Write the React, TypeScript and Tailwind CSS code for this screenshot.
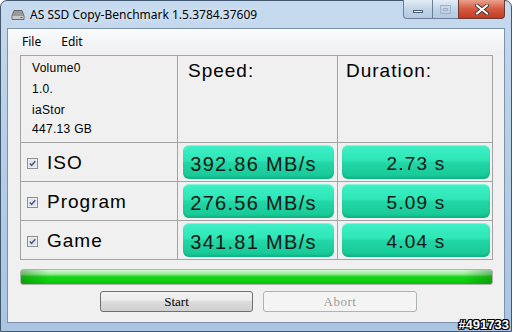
import React from "react"

const rows = [
  { name: "ISO", speed: "392.86 MB/s", dur: "2.73 s" },
  { name: "Program", speed: "276.56 MB/s", dur: "5.09 s" },
  { name: "Game", speed: "341.81 MB/s", dur: "4.04 s" },
]

function DriveIcon() {
  return (
    <svg width="14" height="12" viewBox="0 0 14 12">
      <path d="M3 1.5 H11 L13 7 V10.5 H1 V7 Z" fill="#9a9a9a" stroke="#6b6b6b" strokeWidth="1" />
      <rect x="1.5" y="7" width="11" height="3" fill="#c8c8c8" />
      <rect x="9.5" y="8" width="2" height="1" fill="#5a5a5a" />
    </svg>
  )
}

function CheckBox() {
  return (
    <svg width="11" height="11" viewBox="0 0 11 11">
      <rect x="0.5" y="0.5" width="10" height="10" fill="#f4f4f4" stroke="#8f8f8f" />
      <rect x="1.5" y="1.5" width="8" height="8" fill="#e2e4ea" />
      <path d="M2.8 5.4 L4.6 7.3 L8.3 3.2" fill="none" stroke="#4a5a8c" strokeWidth="1.5" />
    </svg>
  )
}

function GreenCell({ text, wide }: { text: string; wide?: boolean }) {
  return (
    <div
      className={`h-full rounded-[6px] bg-[linear-gradient(to_bottom,#3ef0c6_0%,#2ee6b6_45%,#22d6a5_52%,#16c795_100%)] shadow-[inset_0_-2px_2px_rgba(0,120,80,0.25),inset_0_1px_1px_rgba(255,255,255,0.4)] flex items-center justify-center pt-[4px] text-[#161616] font-['Liberation_Sans',Arial,sans-serif] ${
        wide ? "text-[20px] tracking-[1.3px] pr-[10px]" : "text-[19px] tracking-[1.2px]"
      }`}
    >
      {text}
    </div>
  )
}

export default function App() {
  return (
    <div className="relative w-[513px] h-[332px] bg-white overflow-hidden">
      {/* window frame */}
      <div className="w-[512px] h-[332px] rounded-t-[7px] border border-[#42586e] bg-[linear-gradient(to_bottom,#c6daef_0%,#b7cfe8_40%,#aac5e2_100%)] px-[6px] flex flex-col">
        {/* title bar */}
        <div className="h-[27px] flex items-start justify-between">
          <div className="flex items-center gap-[5px] pl-[4px] pt-[7px]">
            <DriveIcon />
            <span className="text-[12px] leading-[14px] text-black font-['Noto_Sans',sans-serif] [text-shadow:0_0_6px_rgba(255,255,255,0.9)]">
              AS SSD Copy-Benchmark 1.5.3784.37609
            </span>
          </div>
          <div className="flex h-[19px] -mt-px">
            <div className="w-[29px] rounded-bl-[4px] border border-r-0 border-t-0 border-[#6b7f96] bg-[linear-gradient(to_bottom,#e3edf7,#c3d4e7_50%,#b4c9e0)] flex items-center justify-center">
              <div className="w-[10px] h-[3px] mt-[4px] bg-white border border-[#4c5d72]" />
            </div>
            <div className="w-[26px] border-l border-b border-[#6b7f96] bg-[linear-gradient(to_bottom,#e3edf7,#c3d4e7_50%,#b4c9e0)] flex items-center justify-center">
              <div className="w-[11px] h-[9px] border border-[#9fb1c6] flex items-center justify-center">
                <div className="w-[5px] h-[3px] border border-[#9fb1c6]" />
              </div>
            </div>
            <div className="w-[47px] rounded-br-[4px] border border-t-0 border-[#6b3a32] bg-[linear-gradient(to_bottom,#e9a18d,#d45a41_50%,#c13c22)] flex items-center justify-center">
              <svg width="14" height="11" viewBox="0 0 14 11">
                <path d="M2 1.5 L12 9.5 M12 1.5 L2 9.5" stroke="#3a2a2a" strokeWidth="3.6" strokeLinecap="square" />
                <path d="M2 1.5 L12 9.5 M12 1.5 L2 9.5" stroke="#ffffff" strokeWidth="2" strokeLinecap="square" />
              </svg>
            </div>
          </div>
        </div>

        {/* client area */}
        <div className="h-[295px] border border-[#7d91aa] bg-[#f0f0f0] flex flex-col font-['Liberation_Sans',Arial,sans-serif]">
          {/* menu */}
          <div className="h-[22px] flex items-center gap-[20px] pl-[14px] pt-[3px] bg-[linear-gradient(to_bottom,#fafbfc,#eff1f4)] text-[12px] text-black font-['Noto_Sans',sans-serif]">
            <span>File</span>
            <span>Edit</span>
          </div>

          {/* results table */}
          <div className="ml-[12px] mt-[4px] w-[473px] grid grid-cols-[156px_159px_154px] grid-rows-[86px_38px_38px_38px] gap-px p-px bg-[#a3a3a3]">
            <div className="bg-[#f0f0f0] pl-[11px] pt-[2px] text-[12px] tracking-[0.3px] text-black">
              <div className="leading-[21px]">Volume0</div>
              <div className="leading-[21px]">1.0.</div>
              <div className="leading-[21px]">iaStor</div>
              <div className="leading-[17px]">447.13 GB</div>
            </div>
            <div className="bg-[#f0f0f0] pl-[10px] pt-[1px] text-[19px] tracking-[1px] text-black">Speed:</div>
            <div className="bg-[#f0f0f0] pl-[8px] pt-[1px] text-[19px] tracking-[1px] text-black">Duration:</div>

            {rows.map((r) => (
              <React.Fragment key={r.name}>
                <div className="bg-[#f0f0f0] flex items-center gap-[9px] pl-[6px] pt-[2px]">
                  <CheckBox />
                  <span className="text-[19px] tracking-[1px] text-black">{r.name}</span>
                </div>
                <div className="bg-[#f0f0f0] pl-[5px] pr-[3px] py-[2px]">
                  <GreenCell text={r.speed} wide />
                </div>
                <div className="bg-[#f0f0f0] pl-[4px] pr-[2px] py-[2px]">
                  <GreenCell text={r.dur} />
                </div>
              </React.Fragment>
            ))}
          </div>

          {/* progress bar */}
          <div className="ml-[12px] mt-[9px] w-[473px] h-[16px] rounded-[3px] border border-[#b2b2b2] bg-[linear-gradient(to_bottom,#d6f8d6_0%,#92ec92_30%,#1ad61a_48%,#06c606_100%)] overflow-hidden">
            <div className="w-full h-full bg-[linear-gradient(to_right,rgba(0,90,0,0.35)_0%,rgba(0,90,0,0)_6%,rgba(0,90,0,0)_94%,rgba(0,90,0,0.35)_100%)]" />
          </div>

          {/* buttons */}
          <div className="flex gap-[10px] ml-[92px] mt-[6px]">
            <div className="w-[153px] h-[21px] rounded-[3px] border border-[#707070] bg-[linear-gradient(to_bottom,#f2f2f2_0%,#ebebeb_50%,#dddddd_50%,#cfcfcf_100%)] flex items-center justify-center text-[13px] text-black font-['Liberation_Serif',serif]">
              Start
            </div>
            <div className="w-[154px] h-[21px] rounded-[3px] border border-[#adb2b5] bg-[#f4f4f4] flex items-center justify-center text-[13px] tracking-[0.5px] text-[#9c9c9c] font-['Liberation_Serif',serif]">
              Abort
            </div>
          </div>
        </div>
      </div>

      {/* watermark */}
      <div className="absolute right-[4px] bottom-[0px] text-[13px] leading-[14px] font-bold text-white font-['Liberation_Sans',Arial,sans-serif] [text-shadow:1px_0_0_#000,-1px_0_0_#000,0_1px_0_#000,0_-1px_0_#000,1px_1px_0_#000,-1px_-1px_0_#000,1px_-1px_0_#000,-1px_1px_0_#000]">
        #491733
      </div>
    </div>
  )
}
